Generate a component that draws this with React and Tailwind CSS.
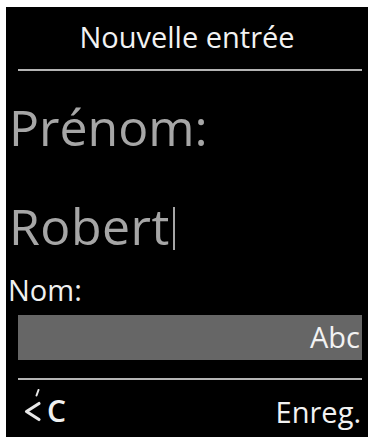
export default function App() {
  return (
    <div className="w-[373px] h-[437px] bg-white overflow-hidden" style={{ fontFamily: '"Open Sans", sans-serif' }}>
      <div className="ml-[6px] mt-[7px] w-[362px] h-[430px] bg-black flex flex-col">
        <div className="mt-[15px] text-center text-[29px] leading-[29px] text-[#f2f2f2]">Nouvelle entrée</div>
        <div className="mt-[18px] ml-[12px] mr-[6px] h-[2px] bg-[#b4b4b4]" />
        <div className="mt-[31px] ml-[3px] text-[50px] leading-[50px] text-[#a6a6a6]">Prénom:</div>
        <div className="mt-[49px] ml-[3px] text-[50px] leading-[50px] text-[#a6a6a6] whitespace-nowrap tracking-[0.5px]">
          Robert<span className="inline-block w-[2px] h-[43px] bg-[#a6a6a6] ml-[3px] align-[-5px]" />
        </div>
        <div className="mt-[24px] ml-[2px] text-[29px] leading-[29px] text-[#f0f0f0]">Nom:</div>
        <div className="mt-[11px] ml-[12px] mr-[6px] h-[45px] bg-[#666666] flex items-center justify-end pr-[2px]">
          <span className="text-[29px] leading-[29px] text-[#f2f2f2] -mt-[3px]">Abc</span>
        </div>
        <div className="mt-[18px] ml-[12px] mr-[6px] h-[2px] bg-[#b4b4b4]" />
        <div className="mt-[9px] flex items-end justify-between pr-[7px]">
          <div className="flex items-end ml-[17px]">
            <svg width="19" height="34" viewBox="0 0 19 34" className="mb-[3px]">
              <path d="M15.5 1 L13.5 6.5" stroke="#e8e8e8" strokeWidth="2" strokeLinecap="round" fill="none" />
              <path d="M16 14.5 L3.5 22.5 L16 30.5" stroke="#e8e8e8" strokeWidth="3.2" strokeLinecap="round" strokeLinejoin="round" fill="none" />
            </svg>
            <span className="ml-[5px] text-[30px] leading-[30px] text-[#f0f0f0] font-semibold">C</span>
          </div>
          <span className="text-[29px] leading-[29px] text-[#f2f2f2]">Enreg.</span>
        </div>
      </div>
    </div>
  );
}
